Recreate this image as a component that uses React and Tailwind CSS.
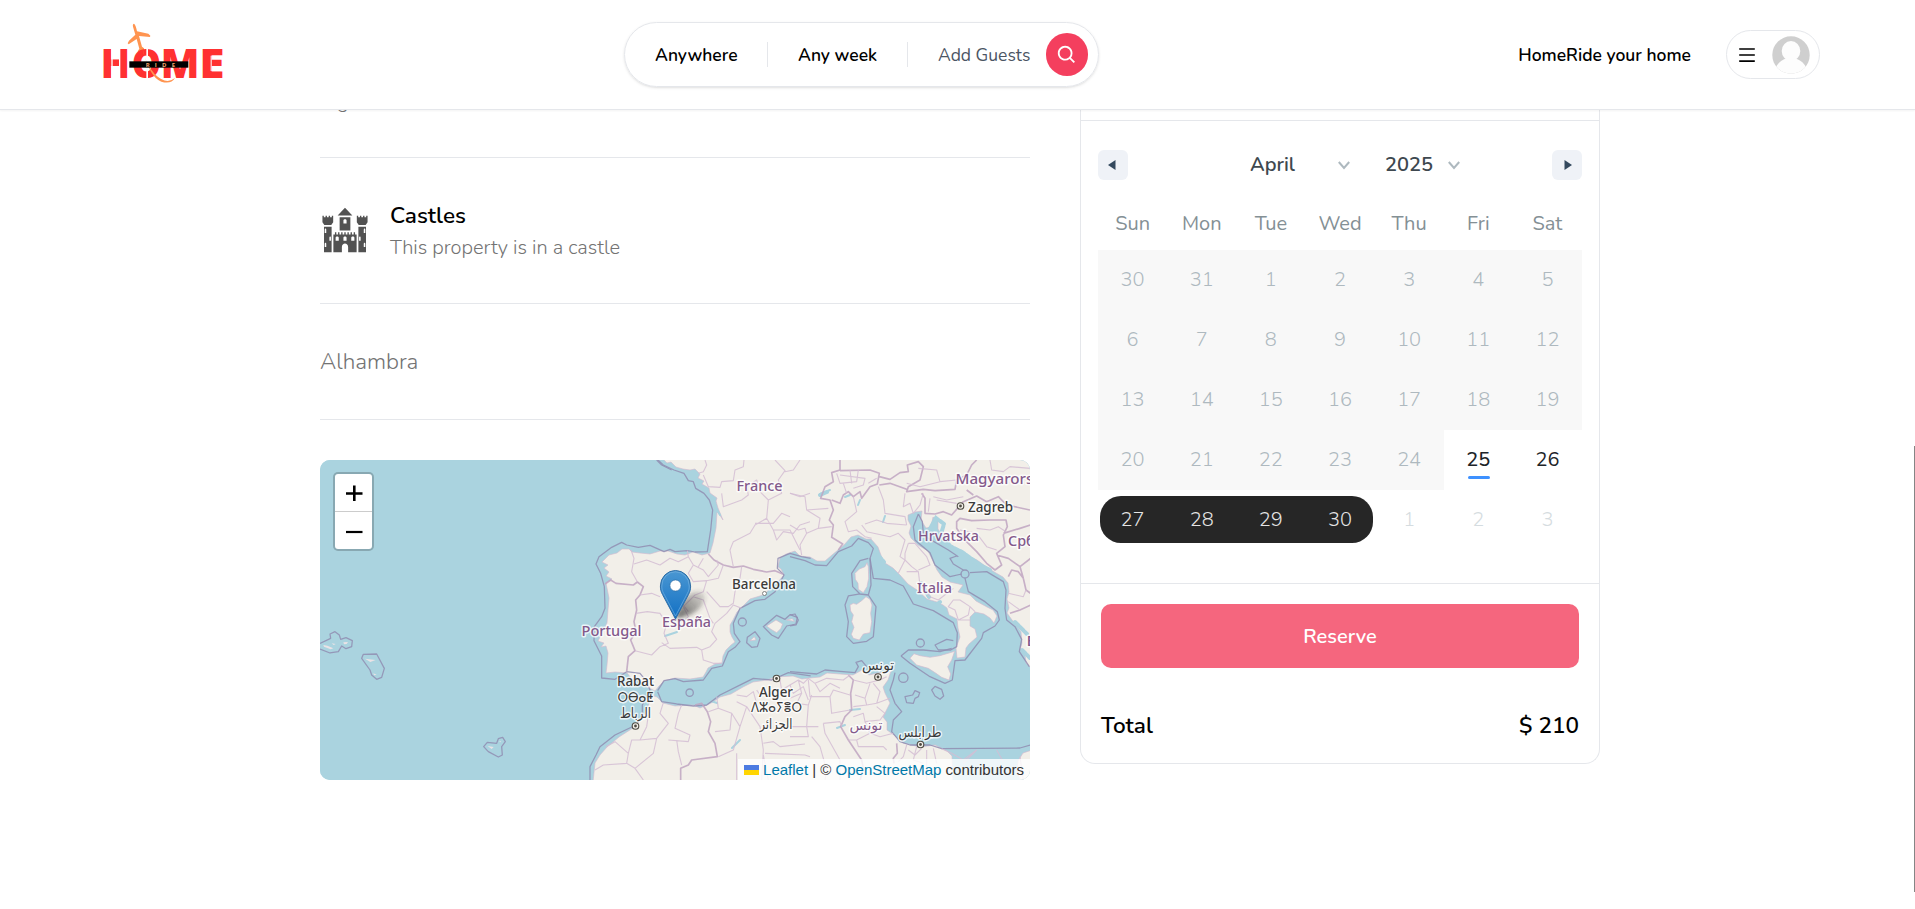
import { GiCastle } from "react-icons/gi";
import { BiSearch } from "react-icons/bi";
import { AiOutlineMenu } from "react-icons/ai";

const WEEKDAYS = ["Sun", "Mon", "Tue", "Wed", "Thu", "Fri", "Sat"];
const PASSED = [
  [30, 31, 1, 2, 3, 4, 5],
  [6, 7, 8, 9, 10, 11, 12],
  [13, 14, 15, 16, 17, 18, 19],
];

function Logo() {
  return (
    <svg width="128" height="66" viewBox="-12 0 384 198" role="img" aria-label="Home Ride">
      <g fill="#ff9450">
        <path d="M93 2c4 2 7 12 9 23l34 7 6 6-1 4-33-3 9 32 6 5 1 8-17 4-3-3 5-8-8-29-24 16-3-3 4-8 19-18-7-24c-1-5 0-9 3-9z" />
      </g>
      <g fill="#ff3131" fontFamily="Open Sans, sans-serif" fontWeight="800" fontSize="124">
        <text x="-7" y="166" textLength="88" lengthAdjust="spacingAndGlyphs">H</text>
        <text x="86" y="166" textLength="88" lengthAdjust="spacingAndGlyphs">O</text>
        <text x="173" y="166" textLength="116" lengthAdjust="spacingAndGlyphs">M</text>
        <text x="289" y="166" textLength="76" lengthAdjust="spacingAndGlyphs">E</text>
      </g>
      <g fill="#fff">
        <path d="M25 77h4v90h-4zM48 77h4v90h-4zM130 76h5v92h-5zM323 98h3v46h-3z" />
      </g>
      <path d="M117 70q8 50 38 83 34 34 61 12-12 20-41 11-37-13-58-106z" fill="#ff9450" />
      <rect x="79" y="115" width="177" height="19" fill="#000" />
      <text x="128" y="131" fontFamily="Open Sans, sans-serif" fontWeight="700" fontSize="18" fill="#f3a36f" textLength="88">RIDE</text>
    </svg>
  );
}

function Avatar() {
  return (
    <svg width="38" height="38" viewBox="0 0 38 38">
      <defs>
        <clipPath id="avatar-clip"><circle cx="19" cy="19" r="18.7" /></clipPath>
      </defs>
      <g clipPath="url(#avatar-clip)">
        <rect width="38" height="38" fill="#cfcfcf" />
        <ellipse cx="19" cy="15" rx="9.3" ry="10" fill="#fdfdfd" />
        <path d="M14 20v2.500c-5 2-8.500 5-10.500 9.500v8h31v-8c-2-4.500-5.500-7.500-10.500-9.500v-2.500z" fill="#fdfdfd" />
      </g>
    </svg>
  );
}

function Header() {
  return (
    <header className="relative z-10 flex h-[110px] shrink-0 items-center justify-between border-b border-[#e5e7eb] bg-white pr-[95px] pl-[99px] shadow-xs">
      <div className="flex w-[525px] items-center pt-[3px]">
        <Logo />
      </div>
      <div className="flex h-[65px] w-[475px] items-center rounded-full border border-[#e5e7eb] pr-2.5 text-[17.5px] shadow-sm">
        <div className="w-[143px] border-r border-[#e5e7eb] pt-px pl-[30px] font-semibold leading-6">Anywhere</div>
        <div className="w-[140px] border-r border-[#e5e7eb] pt-px pl-[30px] font-semibold leading-6">Any week</div>
        <div className="flex-1 pt-px pl-[30px] leading-6 text-[#4b5563]">Add Guests</div>
        <div className="flex h-[43px] w-[42px] items-center justify-center rounded-full bg-[#f43f5e] text-white">
          <BiSearch size={22} />
        </div>
      </div>
      <div className="flex w-[721px] items-center justify-end gap-[35px]">
        <div className="pt-0.5 text-[17.5px] font-semibold leading-[23px]">HomeRide your home</div>
        <div className="flex h-[49px] w-[94px] items-center justify-between rounded-full border border-[#e5e7eb] pr-[9px] pl-2.5">
          <AiOutlineMenu size={20} />
          <Avatar />
        </div>
      </div>
    </header>
  );
}

const COUNTRY = "#83598b";

function MapLabel({ x, y, w, size = 15, color = "#3a3a3a", children }) {
  return (
    <text
      x={x}
      y={y}
      textLength={w}
      lengthAdjust="spacingAndGlyphs"
      textAnchor="middle"
      fontSize={size}
      fontWeight="500"
      fill={color}
      stroke="#fff"
      strokeOpacity="0.75"
      strokeWidth="3"
      strokeLinejoin="round"
      paintOrder="stroke"
      fontFamily="Noto Sans, DejaVu Sans, sans-serif"
    >
      {children}
    </text>
  );
}

function Capital({ x, y }) {
  return (
    <g>
      <circle cx={x} cy={y} r="3.300" fill="#f2efe9" stroke="#4d4a42" strokeWidth="1.100" />
      <circle cx={x} cy={y} r="1.400" fill="#4d4a42" />
    </g>
  );
}

function MapDrawing() {
  return (
    <svg width="710" height="320" viewBox="0 0 710 320" className="block">
      <defs>
        <linearGradient id="pin" x1="0" y1="0" x2="0" y2="1">
          <stop offset="0" stopColor="#4a97d2" />
          <stop offset="1" stopColor="#1270c4" />
        </linearGradient>
        <linearGradient id="pin-shadow" x1="0" y1="1" x2="1" y2="0">
          <stop offset="0" stopColor="#333" stopOpacity="0.75" />
          <stop offset="1" stopColor="#333" stopOpacity="0.100" />
        </linearGradient>
        <filter id="soft" x="-50%" y="-50%" width="200%" height="200%"><feGaussianBlur stdDeviation="2.200" /></filter>
      </defs>
      <rect width="710" height="320" fill="#aad3df" />

      {/* land */}
      <g fill="#f2efe9" stroke="#d3b9cf" strokeWidth="0.600" strokeLinejoin="round">
        <path d="M342 -2L347 3 351 2 356 7 363 9 370 10 375 9 380 14 378 18 384 21 382 24 389 28 390 33 397 38 396 41 398 48 403 60 399 54 397 52 396 68 393 83 390 93 382 95 373 92 365 95 357 94 348 91 340 91 330 94 320 93 312 92 309 89 302 89 297 93 289 95 282 102 288 105 284 108 289 112 286 116 292 119 286 123 289 138 288 150 287 163 282 173 278 181 284 183 281 187 286 186 288 193 287 205 286 213 295 212 307 213 312 219 318 217 322 221 327 227 335 231 339 226 344 221 355 218 370 219 383 217 386 212 388 208 395 204 402 203 403 196 406 190 411 185 415 182 412 177 410 172 410 165 413 160 417 152 422 147 430 139 443 135 450 129 457 123 464 115 461 109 458 107 460 98 466 94 475 91 480 96 490 97 497 101 505 101 512 95 518 90 524 85 531 77 538 75 546 79 551 79 558 87 562 98 565 103 573 108 580 115 588 124 597 130 607 139 617 142 623 145 627 148 629 155 637 159 638 168 640 177 636 188 637 198 645 197 646 188 649 184 657 177 655 169 650 166 650 157 655 152 664 154 670 158 674 163 677 156 673 150 667 147 656 141 650 135 638 132 643 125 630 122 622 117 617 110 611 97 608 91 598 85 591 78 589 73 591 66 588 60 588 55 595 52 602 51 601 60 606 68 611 67 613 57 618 61 618 69 624 78 633 88 642 92 650 97 657 100 668 108 676 113 683 117 688 123 689 132 687 139 689 148 687 153 692 160 697 166 701 172 702 183 700 190 705 194 706 203 712 209 712 -2z" />
        <path d="M273 322L275 303 280 295 287 287 299 277 313 268 321 260 325 253 329 244 330 235 337 237 343 243 355 246 373 245 380 248 387 245 393 242 400 237 411 234 423 227 433 222 447 220 455 217 473 216 482 219 490 218 500 217 507 213 520 214 533 215 542 210 549 215 558 213 571 211 568 220 563 227 565 233 570 243 567 249 563 257 567 262 567 270 574 275 583 283 600 287 615 285 627 291 632 296 633 322zM712 290L703 293 698 301 697 311 701 322 712 322z" />
        <g transform="translate(470 -10) scale(.33333)" strokeWidth="2">
          <path d="M180 465L190 460 200 463 215 452 228 440 240 448 246 465 242 490 245 515 240 548 220 552 208 570 190 565 184 553 192 532 185 515 190 495 182 483zM195 370L208 357 225 350 231 338 235 350 236 385 231 410 220 428 205 418 204 400 196 388zM360 625L372 611 390 617 420 622 450 617 494 604 485 630 473 650 482 672 477 690 455 682 438 670 415 655 380 645z" />
        </g>
        <g transform="translate(240 -10) scale(.33333)" strokeWidth="2">
          <path d="M620 528L648 510 668 522 662 536 650 548 633 538zM570 572L583 560 588 570zM680 510L697 506 703 514z" />
        </g>
      </g>

      {/* shallow inlets and lakes */}
      <path d="M608 72l8-14 8 6-3 10 9 12 12 6 24 17M650 100l20 10M558 95l6 7M695 162l12 12M601 123l8 14M500 35l7-3M620 142l-8 6M702 190l8 8" fill="none" stroke="#aad3df" strokeWidth="4" strokeLinecap="round" strokeDasharray="5 2" />
      <path d="M500 34l10-4M525 37l5-2M563 62l2-6M538 45l2-5M345 176l12-4M388 240l9 3M525 265l-8 3M530 250l10-1M420 280l-8 8M400 55l-3-5" fill="none" stroke="#aad3df" strokeWidth="2" strokeLinecap="round" />

      {/* maritime limits */}
      <g fill="none" stroke="#918db2" strokeOpacity="0.850" strokeLinejoin="round">
        <g transform="translate(240 -10) scale(.33333)" strokeWidth="3.800">
          <path d="M292 28L310 45 342 60 372 70 385 92 400 95 407 115 432 130 448 150 458 180 452 240 442 305 405 306 382 302 345 305 330 298 312 305 270 286 235 292 200 285 185 277 155 292 117 320 108 342 122 370 133 410 135 475 125 500 103 530 102 572 125 618 125 684 165 688 200 665 240 670 258 692 270 720 247 765 247 795 228 825 165 855 120 890 108 915 90 950 90 992" />
          <path d="M293 722L312 692 345 686 370 695 430 690 455 655 487 648 505 605 525 592 540 575 523 550 520 520 540 475 585 452 615 448 645 425 672 375 652 355 654 325 690 310 725 320 752 325M293 725L305 755 350 762 400 768 440 765 480 735 550 700 580 685 635 690 685 668 752 678" />
          <circle cx="389" cy="728" r="11" /><circle cx="547" cy="516" r="12" />
          <path d="M610 530L650 496 675 508 690 494 712 502 708 522 680 528 655 565 635 555zM562 562L585 545 600 565 592 590 575 592 560 578z" />
        </g>
        <g transform="translate(470 -10) scale(.33333)" strokeWidth="3.800">
          <path d="M0 320L45 332 75 345 110 347 145 305 185 288 205 265 235 278 250 295 240 325 250 385 300 390 340 408 370 462 430 482 490 518 502 548 500 590 482 600 445 600 435 585 470 568 490 572" />
          <path d="M235 325L210 332 185 370 188 410 210 432 235 435 258 470 250 560 230 574 190 580 170 560 175 515 165 465 175 438 210 432M240 325L243 405 235 435M333 618L355 600 400 600 450 605 485 595M333 618L360 640 420 680 465 700 487 690 495 632 525 630 575 565 580 548 615 528 628 510 622 485 585 455 535 425 525 385M385 192L370 230 375 270 420 308 435 345 480 380 515 372M520 360L490 342 480 325 500 318M540 368L590 365 640 395 648 420 645 475 650 510 675 530 695 568 688 605 718 650M385 192L397 215 400 250 410 262 475 300 505 320" />
          <circle cx="525" cy="372" r="12" /><circle cx="391" cy="579" r="12" /><circle cx="340" cy="683" r="14" />
          <path d="M345 740L368 735 375 722 389 728 385 740 375 745 370 760 350 758zM425 720L435 709 455 718 461 738 450 748 435 738zM0 495L15 492 25 510 18 525 0 528M0 665L80 672 105 660 150 664 195 668 205 650 198 637 215 632 230 650M315 668L310 690 300 720 315 760 335 785 310 810 305 845 330 875 360 885 420 885 455 896 690 894 722 885" />
        </g>
        <g transform="translate(-10 -10) scale(.33333)" strokeWidth="3.800">
          <path d="M30 580L62 565 60 552 75 545 88 555 92 568 108 563 127 572 125 590 108 596 95 588 85 605 60 609 30 597M155 625L160 613 200 612 223 655 215 682 200 688 185 675 180 660zM521 890L532 877 560 880 565 866 578 862 586 875 575 890 577 915 565 921 535 905zM1040 30L1055 45 1085 60" />
        </g>
      </g>
      <g transform="translate(-10 -10) scale(.33333)" fill="#ebe3e6">
        <path d="M40 585l12 2 18 8-8 3-20-8zM100 577l14-1-4 6-8 1zM65 580l12 2-6 3zM165 626l32 4-16 6zM190 670l10 4-8 2zM533 888l18 3-6 6zM568 872l6 3-4 2z" />
      </g>

      {/* national borders */}
      <g fill="none" stroke="#bfa5c1" strokeOpacity="0.850" strokeLinejoin="round">
        <g transform="translate(240 -10) scale(.33333)" strokeWidth="5">
          <path d="M135 402L152 390 168 400 220 405 232 396 250 410 240 435 227 450 230 480 222 515 228 545 212 570 225 602 205 620 200 665M445 312L462 330 490 345 520 352 550 348 580 358 620 366 645 362 668 372M405 765L425 760 442 785 452 815 445 845 465 880 472 920 395 930 385 945 362 955 362 992" />
        </g>
        <g transform="translate(470 -10) scale(.33333)" strokeWidth="5">
          <path d="M145 300L158 282 125 262 130 225 118 210 130 180 120 150 92 145 105 110 130 95 125 68 150 60 150 30M125 150L150 160 160 135 175 125 190 140 210 125 215 145 240 110 262 102 268 70 240 60 150 62M268 80L300 88 330 68 355 65 352 45 385 35 400 50 390 90 355 110 350 125 400 118 435 122 495 118 500 90 530 75 545 45 560 30M268 105L300 100 350 118M395 130L405 145 405 190 435 192 460 185 485 195 520 155 560 138 590 155 625 140 650 165 720 180M500 215L510 205 545 212 600 210 648 210 652 230 640 255 645 290 620 310 635 345 615 360 590 340 560 305 520 265 500 235zM640 250L690 235 722 225M620 315L655 325 690 350 722 325M655 380L665 360 685 365 700 385 708 420 722 430M690 350L700 385M660 490L690 480 722 465M175 675L190 690 182 730 185 780 165 800 152 830 175 870 215 930 220 955 210 992M320 880L322 910 310 925 312 940M530 120L550 135" />
        </g>
      </g>

      {/* regional borders */}
      <g fill="none" stroke="#d3bdd4" strokeOpacity="0.850" strokeLinejoin="round">
        <g transform="translate(240 -10) scale(.33333)" strokeWidth="3.300">
          <path d="M213 300L222 325 215 365 232 395M222 342L260 330 300 345 330 325 355 335 385 320 382 302M240 435L275 430 300 440M228 490L262 485 300 490 320 520 312 550 325 580 300 590 275 615 225 602M305 578L330 595 410 592 425 600 450 590 470 568 455 545 465 520 500 490 520 465 545 475M425 600L430 630 460 640 485 640M385 320L400 345 385 370 400 395 440 392 430 425 405 435 370 470 385 500 375 510M400 345L430 360 445 380 475 345 470 330M430 325L415 350M440 425L480 470 505 470 520 460 525 425 540 385 545 350M345 470L370 465 385 485M400 440L430 450 450 505 460 520M490 345L475 385 440 392" />
          <path d="M415 70L430 65 440 45 435 30M430 75L445 110 480 112 485 95 520 92 525 60 550 50 552 30M485 130L490 170 545 150 565 135 560 110 590 90 600 125 625 150 665 130 655 90 675 62 645 30M625 150L620 205 585 225 570 250 520 275 510 300 520 350M620 205L640 240 690 240 705 270 720 300M675 65L700 60 720 30M690 130L720 140 750 130M585 220L640 220 665 190 690 200M640 240L650 270 670 245 700 250 720 225 750 215" />
          <path d="M138 890L165 875 205 910 215 870 240 870 260 830 265 795 250 800M205 910L200 940 130 945 105 960M240 870L290 865 280 910 225 955 200 940M290 865L325 820 300 790 310 758M325 870L385 875 390 855 345 835 355 790 365 765M350 870L355 905 365 945M225 955L250 990M470 740L475 775 445 785M475 775L515 790 510 840 465 845M515 790L540 830 520 900 475 920M540 830L560 770 530 755M560 770L600 830 610 900 605 990M610 880L640 875 660 890 735 882M615 910L735 915 750 920M610 915L625 990M530 910L530 990M530 735L560 740 580 725 590 760M660 690L665 720 690 705 700 730 730 710 745 750M600 735L590 720" />
        </g>
        <g transform="translate(470 -10) scale(.33333)" strokeWidth="3.300">
          <path d="M0 130L45 140 50 180 90 205 85 235 50 250 30 285 35 315M50 180L115 175M0 225L25 240 45 235 50 250M85 235L125 230M190 140L200 185 165 215 175 245 200 240 225 260 245 265M225 222L260 210 290 220 350 225M215 225L230 245 300 260 325 250 345 270 330 320 345 330 325 370M265 110L280 150 285 190 345 200 350 225M345 130L340 170 360 160 370 190 390 165 400 130M355 280L345 310 345 330 365 350 385 365 350 365M355 280L375 280 410 320 420 345 385 360M385 365L390 405 420 440 445 450 490 415M490 450L510 450 540 470 535 495 505 510 495 480 475 470zM540 470L555 485M505 510L540 510" />
          <path d="M140 70L150 100 200 95 205 60M150 75L225 85 220 105 190 115M160 100L170 130M180 60L185 100M260 85L235 100M350 100L390 110 450 95 500 90M385 55L440 60 450 95M600 30L605 60 640 65 660 50 720 55M440 150L500 160M420 145L415 185M430 140L470 150 520 140M560 235L600 240 625 230 648 245M510 240L560 250 590 290 620 300M655 430L700 440 708 420M655 455L690 480" />
          <path d="M0 705L25 690 40 700 55 685 75 700 110 685 160 690 180 675M25 690L35 730 0 745M55 690L60 740 120 740 130 720 180 735M75 700L90 725 120 700 150 715M120 740L125 790 180 780M35 730L20 760 55 765 65 735M55 765L50 830 85 830M100 820L150 815 155 830M100 820L105 850 150 930 150 990M0 830L50 830 55 860 0 860M65 860L90 890 110 960 105 990M190 690L230 700 270 690 290 680M195 735L225 745 230 765 190 770M225 745L240 700M230 765L260 760 270 725 250 700M260 760L300 745M190 800L220 790 225 815 270 810 285 790 260 770M225 815L240 850 200 870 175 870M240 850L270 860 310 850M200 870L205 890 280 890 290 900M350 885L340 920 325 935M380 890L370 930 400 940M410 900L410 990M430 895L440 940M455 896L485 910 520 930 560 900M620 900L640 935M560 900L520 940M690 920L700 990M355 900L375 915 395 895" />
        </g>
      </g>

      {/* place names */}
      <MapLabel x={439.500} y={31} w={46} color={COUNTRY}>France</MapLabel>
      <MapLabel x={291.500} y={175.500} w={60} color={COUNTRY}>Portugal</MapLabel>
      <MapLabel x={366.500} y={166.500} w={49} color={COUNTRY}>España</MapLabel>
      <MapLabel x={614.500} y={132.500} w={35} color={COUNTRY}>Italia</MapLabel>
      <MapLabel x={628.500} y={81} w={61} color={COUNTRY}>Hrvatska</MapLabel>
      <MapLabel x={678} y={24} w={85} color={COUNTRY}>Magyarorsz</MapLabel>
      <MapLabel x={712} y={85.500} w={48} color={COUNTRY}>Србија</MapLabel>
      <MapLabel x={729} y={186} w={45} color={COUNTRY}>Ελλάς</MapLabel>
      <MapLabel x={546} y={270} w={33} size={14} color={COUNTRY}>تونس</MapLabel>
      <MapLabel x={444} y={129} w={64}>Barcelona</MapLabel>
      <circle cx="444.500" cy="133.500" r="2" fill="#fff" stroke="#777" strokeWidth="0.900" />
      <MapLabel x={670.500} y={52} w={45}>Zagreb</MapLabel>
      <Capital x={640.500} y={46} />
      <MapLabel x={315.500} y={225.500} w={37}>Rabat</MapLabel>
      <MapLabel x={315.500} y={241.500} w={36} size={14}>ⵔⴱⴰⵟ</MapLabel>
      <MapLabel x={315.500} y={258} w={31} size={14}>الرباط</MapLabel>
      <Capital x={315.500} y={266} />
      <Capital x={456.500} y={218.500} />
      <MapLabel x={456} y={236.500} w={34}>Alger</MapLabel>
      <MapLabel x={456.500} y={252} w={51} size={14}>ⴷⵣⴰⵢⴻⵔ</MapLabel>
      <MapLabel x={456} y={268.500} w={33} size={14}>الجزائر</MapLabel>
      <MapLabel x={558} y={210} w={32} size={14}>تونس</MapLabel>
      <Capital x={558} y={217} />
      <MapLabel x={600} y={277} w={43} size={14}>طرابلس</MapLabel>
      <Capital x={600.500} y={284.500} />

      {/* pin */}
      <path d="M356 159C359 146 366 131 380 131 390 134 384 148 370 155z" fill="url(#pin-shadow)" filter="url(#soft)" />
      <path d="M355.500 159L342.500 134.500C340.800 131.500 340.400 129 340.400 126A15.100 15.500 0 0 1 370.600 126C370.600 129 370.200 131.500 368.500 134.500z" fill="url(#pin)" stroke="#2f6ea6" strokeWidth="1" />
      <path d="M355.500 156L343.700 133.500C342.200 131 341.800 129 341.800 126A13.700 14.200 0 0 1 369.200 126C369.200 129 368.800 131 367.300 133.500z" fill="none" stroke="#7bb5e2" strokeWidth="1" strokeOpacity="0.600" />
      <circle cx="355.500" cy="125.500" r="5.600" fill="#fff" stroke="#2f6ea6" strokeWidth="0.700" />
    </svg>
  );
}

function ListingMap() {
  return (
    <div className="relative mt-10 h-[320px] w-[710px] overflow-hidden rounded-[10px] bg-[#aad3df]">
      <MapDrawing />
      <div className="absolute top-3 left-[13px] flex h-[79px] w-[41px] flex-col rounded-[5px] border-2 border-black/20 bg-white bg-clip-padding">
        <svg viewBox="0 0 37 37" className="h-[38px] border-b border-[#ccc]">
          <path d="M11 19.500h16.500M19.300 11.500v15.500" stroke="#000" strokeWidth="2.600" />
        </svg>
        <svg viewBox="0 0 37 37" className="h-[37px]">
          <path d="M11 20h16.500" stroke="#000" strokeWidth="2.200" />
        </svg>
      </div>
      <div className="absolute right-0 bottom-0 flex h-[21px] w-[292px] items-center justify-end bg-white/80 pr-1.5 font-['Liberation_Sans',sans-serif] text-[15px] whitespace-pre text-[#333]">
        <svg width="15" height="10" viewBox="0 0 15 10" className="mr-1 shrink-0">
          <path d="M0 0h15v5H0z" fill="#4c7be1" />
          <path d="M0 5h15v5H0z" fill="#ffd500" />
        </svg>
        <span className="text-[#0078a8]">Leaflet</span>
        <span> | © </span>
        <span className="text-[#0078a8]">OpenStreetMap</span>
        <span> contributors</span>
      </div>
    </div>
  );
}

function ListingInfo() {
  return (
    <section className="w-[710px] shrink-0 text-[20px] leading-[30px] font-light text-[#737373]">
      <div className="-mt-[23px] flex gap-5 pb-10">
        <div>1 guests</div>
        <div>1 rooms</div>
        <div>1 bathrooms</div>
      </div>
      <hr className="border-[#e5e7eb]" />
      <div className="flex items-center gap-5 py-10">
        <GiCastle size={50} className="-mt-px text-[#525252]" />
        <div>
          <div className="text-[22.5px] leading-[35px] font-semibold text-black">Castles</div>
          <div>This property is in a castle</div>
        </div>
      </div>
      <hr className="border-[#e5e7eb]" />
      <div className="py-10 text-[22.5px] leading-[35px]">Alhambra</div>
      <hr className="border-[#e5e7eb]" />
      <ListingMap />
    </section>
  );
}

function Chevron() {
  return (
    <svg width="12" height="9" viewBox="0 0 12 9" fill="none" stroke="#aeb9bf" strokeWidth="2">
      <path d="M0.800 1l5.200 6 5.200-6" />
    </svg>
  );
}

function Calendar() {
  return (
    <div className="h-[462px] px-[17px] pt-[29px] text-[20px]">
      <div className="flex h-[30px] items-center">
        <div className="flex size-[30px] items-center justify-center rounded-[6px] bg-[#eff2f7] pr-0.5">
          <svg width="8" height="10" viewBox="0 0 8 10"><path d="M7.500 0v10L0 5z" fill="#34495e" /></svg>
        </div>
        <div className="flex flex-1 items-center pl-[122px] font-semibold text-[#3e484f]">
          <span className="w-[88px]">April</span>
          <Chevron />
          <span className="ml-[35px] w-[63px]">2025</span>
          <Chevron />
        </div>
        <div className="flex size-[30px] items-center justify-center rounded-[6px] bg-[#eff2f7] pl-0.5">
          <svg width="8" height="10" viewBox="0 0 8 10"><path d="M0.500 0v10L8 5z" fill="#34495e" /></svg>
        </div>
      </div>
      <div className="grid h-[70px] grid-cols-7 pt-[29px] text-center leading-[30px] text-[#849095]">
        {WEEKDAYS.map((d) => (
          <div key={d}>{d}</div>
        ))}
      </div>
      {PASSED.map((week) => (
        <div key={week[0]} className="grid h-[60px] grid-cols-7 items-center bg-[#f8f8f8] text-center font-light text-[#aeb9bf]">
          {week.map((d) => (
            <div key={d}>{d}</div>
          ))}
        </div>
      ))}
      <div className="grid h-[60px] grid-cols-7 text-center leading-[60px] font-light">
        {[20, 21, 22, 23, 24].map((d) => (
          <div key={d} className="bg-[#f8f8f8] text-[#aeb9bf]">{d}</div>
        ))}
        <div className="relative font-medium text-[#1d2429]">
          25
          <div className="absolute bottom-[11px] left-[24px] h-[3px] w-[22px] rounded-sm bg-[#3e91ff]" />
        </div>
        <div className="font-normal text-[#1d2429]">26</div>
      </div>
      <div className="grid grid-cols-7 pt-1.5 text-center leading-[47px] font-light">
        <div className="ml-0.5 rounded-l-[21px] bg-[#262626] pr-0.5 text-neutral-200">27</div>
        <div className="bg-[#262626] text-neutral-200">28</div>
        <div className="bg-[#262626] text-neutral-200">29</div>
        <div className="mr-0.5 rounded-r-[21px] bg-[#262626] pl-0.5 text-neutral-200">30</div>
        {[1, 2, 3].map((d) => (
          <div key={d} className="text-[#d5dce0]">{d}</div>
        ))}
      </div>
    </div>
  );
}

function Reservation() {
  return (
    <aside className="h-[654px] w-[520px] shrink-0 rounded-b-[15px] border border-t-0 border-[#e5e7eb]">
      <div className="h-[11px] border-b border-[#e5e7eb]" />
      <Calendar />
      <div className="border-t border-[#e5e7eb] p-5">
        <button className="block h-[64px] w-full rounded-[10px] bg-[#f5667e] pt-0.5 text-[20px] font-semibold text-white">Reserve</button>
        <div className="flex justify-between pt-10 text-[22.5px] leading-[35px] font-semibold text-black">
          <span>Total</span>
          <span>$ 210</span>
        </div>
      </div>
    </aside>
  );
}

export default function App() {
  return (
    <div className="relative flex h-[909px] w-full flex-col overflow-hidden bg-white font-['Nunito','Lato',sans-serif] text-black">
      <Header />
      <main className="flex items-start gap-[50px] pl-[320px]">
        <ListingInfo />
        <Reservation />
      </main>
      <div className="absolute top-[446px] right-0 h-[446px] w-px bg-[#858585]" />
    </div>
  );
}
